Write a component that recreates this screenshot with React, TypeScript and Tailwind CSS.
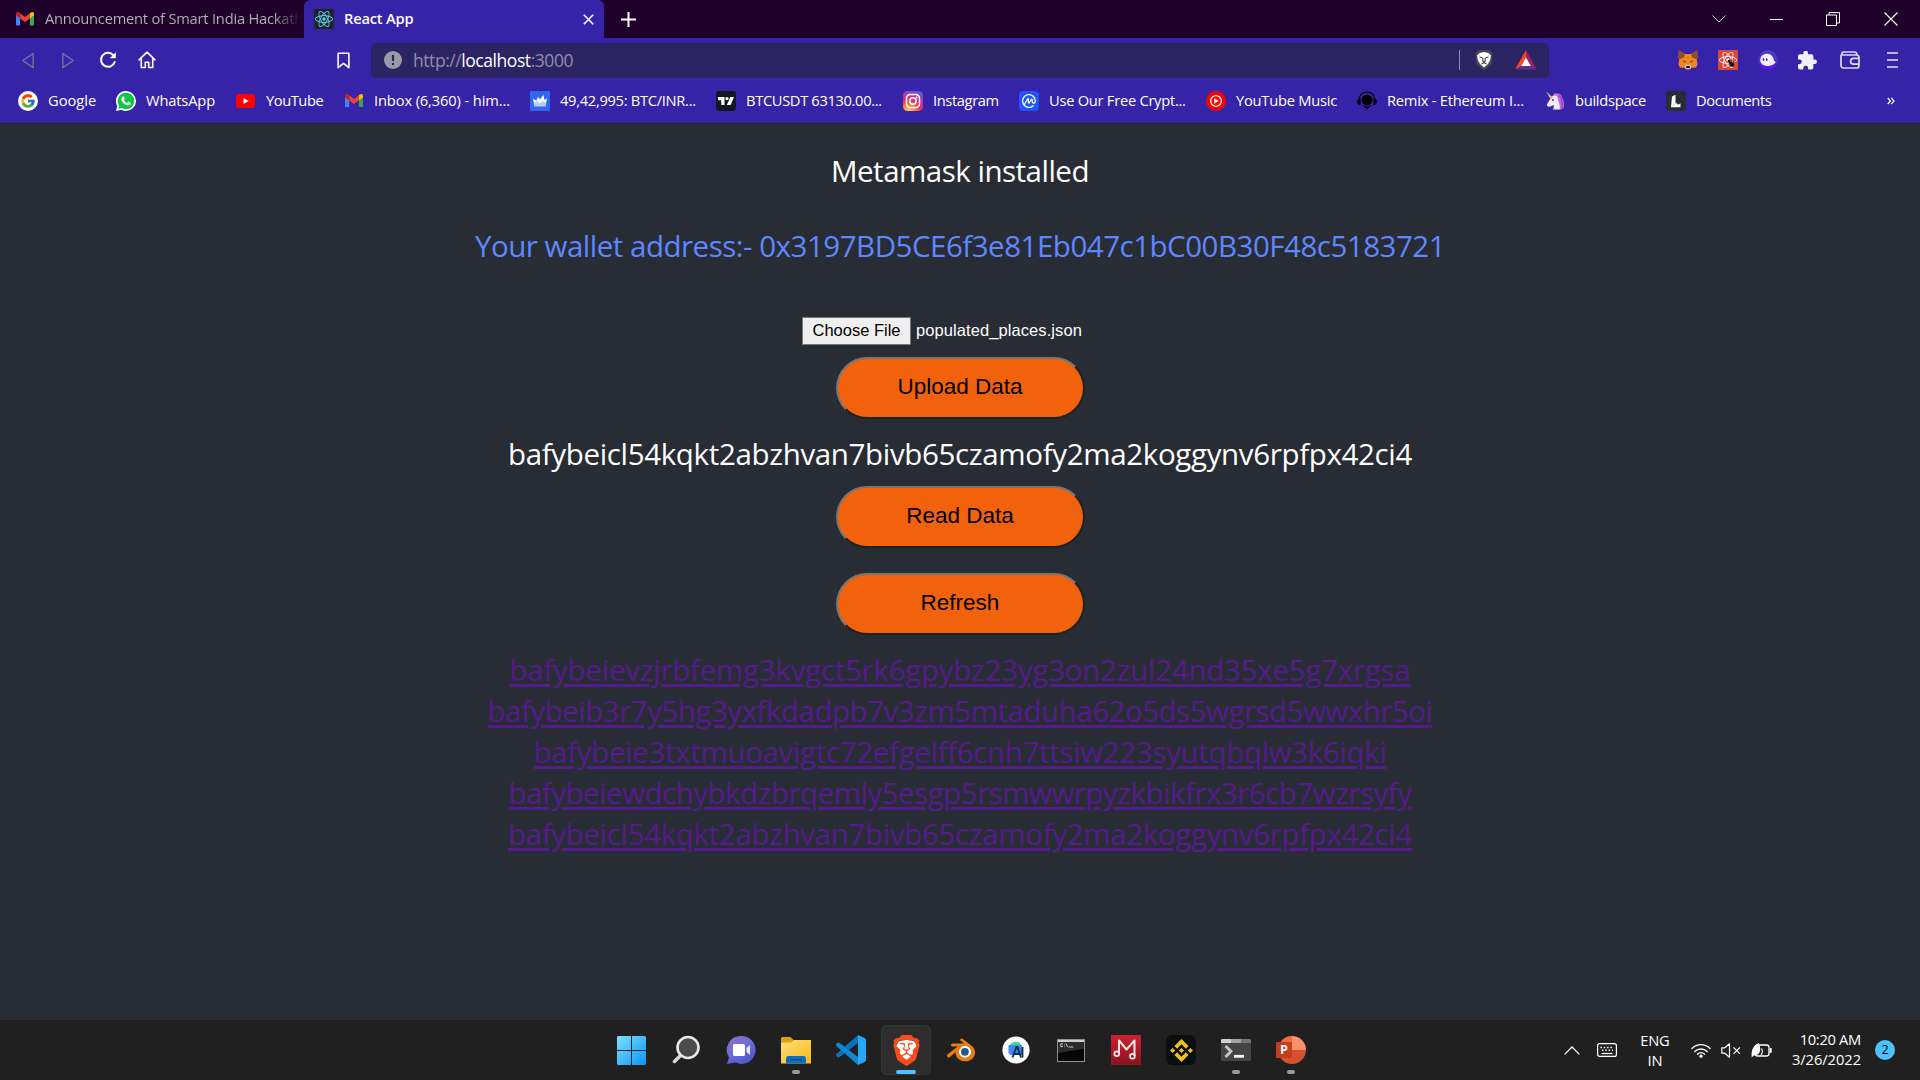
import React from "react";
import {
  SiBinance,
  SiBlender,
  SiBrave,
  SiCoinmarketcap,
  SiReact,
  SiTradingview,
} from "react-icons/si";
import { FcGoogle } from "react-icons/fc";

type IconProps = { className?: string };

/* ---------- favicons ---------- */

function Gmail({ className }: IconProps) {
  return (
    <svg viewBox="0 0 24 18" className={className}>
      <path d="M0 3v13.400a1.600 1.600 0 0 0 1.600 1.600h3.900V7L0 3z" fill="#4285f4" />
      <path d="M24 3v13.400a1.600 1.600 0 0 1-1.600 1.600h-3.900V7L24 3z" fill="#34a853" />
      <path d="M18.500 1.800V8.500L24 4.400V2.500C24 .2 21.400-.7 19.800.8z" fill="#fbbc04" />
      <path d="M5.500 8.500V1.800L12 6.700l6.500-4.900v6.700L12 13.400z" fill="#ea4335" />
      <path d="M0 2.500v1.900l5.500 4.100V1.800L4.200.8C2.600-.7 0 .2 0 2.500z" fill="#c5221f" />
    </svg>
  );
}

function ReactTile({ className }: IconProps) {
  return (
    <span className={`flex items-center justify-center rounded-[2px] bg-[#20232a] ${className}`}>
      <SiReact className="size-[18px] text-[#61dafb]" />
    </span>
  );
}

function GoogleFav() {
  return (
    <span className="flex size-5 items-center justify-center rounded-full bg-white">
      <FcGoogle className="size-4" />
    </span>
  );
}

function WhatsAppFav() {
  return (
    <svg viewBox="0 0 24 24" className="size-5">
      <path d="M12 0a12 12 0 0 1 0 24c-2.100 0-4.100-.5-5.800-1.500L0 24l1.600-6A12 12 0 0 1 12 0z" fill="#fff" />
      <path d="M12 2a10 10 0 0 1 0 20c-1.900 0-3.700-.5-5.300-1.500L2.800 21.500l1.100-3.700A10 10 0 0 1 12 2z" fill="#10c943" />
      <path d="M8.200 6.500c.5-.5 1.100-.3 1.400.3l.9 2c.2.500-.1 1-.9 1.900.9 1.800 2.100 2.900 3.900 3.600.8-1 1.200-1.500 1.700-1.300l2.200 1.100c.5.300.3 1.500-.3 2.200-1 1.100-2.700 1.200-4.600.5-3-1.200-5-3.500-6-5.800-.6-1.700.3-3.300 1.700-4.500z" fill="#fff" />
    </svg>
  );
}

function YouTubeFav() {
  return (
    <svg viewBox="0 0 20 20" className="size-5">
      <rect x="0" y="3" width="19" height="14" rx="3" fill="#f00" />
      <path d="M7.500 7l5.200 3-5.200 3z" fill="#fff" />
    </svg>
  );
}

function WazirFav() {
  return (
    <svg viewBox="0 0 20 20" className="size-5">
      <rect width="20" height="20" rx="1" fill="#3067f0" />
      <path d="M3 7.500l3.200 2.300L8 6l2 2.300L13.500 4l1 5L17 7.500l-1 5H4z" fill="#fff" />
      <path d="M3.700 12l3.800-2 2.500 2.500 2.500-2.500 3.800 2-.6 3.500H4.300z" fill="#b9cdfb" />
    </svg>
  );
}

function TradingFav() {
  return (
    <span className="flex size-5 items-center justify-center rounded-[3px] bg-[#131722]">
      <SiTradingview className="size-4 text-white" />
    </span>
  );
}

function InstagramFav() {
  return (
    <svg viewBox="0 0 20 20" className="size-5">
      <defs>
        <radialGradient id="ig" cx=".28" cy="1.05" r="1.100">
          <stop offset="0" stopColor="#ffdc74" />
          <stop offset=".3" stopColor="#fb8a3c" />
          <stop offset=".55" stopColor="#e4335f" />
          <stop offset=".8" stopColor="#b735a8" />
          <stop offset="1" stopColor="#5b58d8" />
        </radialGradient>
      </defs>
      <rect width="20" height="20" rx="4.500" fill="url(#ig)" />
      <rect x="3.500" y="3.500" width="13" height="13" rx="3.800" fill="none" stroke="#fff" strokeWidth="1.500" />
      <circle cx="10" cy="10" r="3.200" fill="none" stroke="#fff" strokeWidth="1.500" />
      <circle cx="13.700" cy="6.300" r=".9" fill="#fff" />
    </svg>
  );
}

function CoinFav() {
  return (
    <span className="flex size-5 items-center justify-center rounded-[4px] bg-[#1f56fb]">
      <SiCoinmarketcap className="size-[14px] text-white" />
    </span>
  );
}

function YtMusicFav() {
  return (
    <svg viewBox="0 0 20 20" className="size-5">
      <circle cx="10" cy="10" r="10" fill="#f00" />
      <circle cx="10" cy="10" r="5.300" fill="none" stroke="#fff" strokeWidth="1.200" />
      <path d="M8.200 7.200l4.600 2.800-4.600 2.800z" fill="#fff" />
    </svg>
  );
}

function RemixFav() {
  return (
    <svg viewBox="0 0 20 20" className="size-5">
      <path d="M2.300 8.500C2.600 3.500 6 1.200 10 1.200s7.400 2.300 7.700 7.300" fill="none" stroke="#0a0a14" strokeWidth="1.300" />
      <circle cx="10" cy="9" r="5.400" fill="#000" />
      <path d="M3.600 7v7C1.300 14 .2 12.500.2 10.500S1.300 7 3.600 7zM16.400 7v7c2.300 0 3.400-1.500 3.400-3.500S18.700 7 16.400 7z" fill="#000" />
      <path d="M5 13.800l5 2 5-2-5 4.700z" fill="#000" />
    </svg>
  );
}

function UnicornFav() {
  return (
    <svg viewBox="0 0 20 20" className="size-5">
      <path d="M9 3.800C12.500 1.200 17 3 17.300 7c2.200 2.500 1 5.500 2 8-.3 2.500-2.500 3.500-4.300 3.500l-4-8z" fill="#cf63dc" />
      <path d="M14 4.500c3 1.500 2.500 4 3 6.500s1 4 .3 6.500" fill="none" stroke="#7d48c9" strokeWidth="1.300" />
      <path d="M8 4.500l3.500 0c2 3 1.300 6 3 8.500l.5 5.500H8c.6-1.800 1-3.200.8-4.600l-4.100 1.900c-1.700.4-3.200-1-2.700-2.500L5.200 8z" fill="#f0eaf5" />
      <path d="M7.800 6.500L1 .5l2.600 3.400-.4.700 2.800 3.700z" fill="#f5c84c" />
      <path d="M1 .5l2.600 3.400 1.200-.3z" fill="#5fd0c5" />
      <path d="M8 4.500l2.500-2.700L11.200 5z" fill="#e387cf" />
      <circle cx="8" cy="9" r=".9" fill="#3a2b4d" />
    </svg>
  );
}

function DocsFav() {
  return (
    <svg viewBox="0 0 20 20" className="size-5">
      <rect width="20" height="20" rx="3" fill="#282c34" />
      <path d="M6 5.500L9.500 3.700v8.800l-3 3.800H5z" fill="#fff" />
      <path d="M6.500 16.300l3.600-4.600 2 2.100 2.400-1.500v4z" fill="#fff" />
    </svg>
  );
}

/* ---------- browser chrome ---------- */

const bookmarks = [
  { label: "Google", icon: <GoogleFav />, box: "w-[98px]", track: "tracking-[0px]" },
  { label: "WhatsApp", icon: <WhatsAppFav />, box: "w-[120px]", track: "tracking-[-0.15px]" },
  { label: "YouTube", icon: <YouTubeFav />, box: "w-[108px]", track: "tracking-[-0.45px]" },
  { label: "Inbox (6,360) - him...", icon: <span className="flex size-5 items-center justify-center"><Gmail className="w-[18px]" /></span>, box: "w-[186px]", track: "tracking-[-0.13px]" },
  { label: "49,42,995: BTC/INR...", icon: <WazirFav />, box: "w-[186px]", track: "tracking-[-0.3px]" },
  { label: "BTCUSDT 63130.00...", icon: <TradingFav />, box: "w-[187px]", track: "tracking-[-0.35px]" },
  { label: "Instagram", icon: <InstagramFav />, box: "w-[116px]", track: "tracking-[-0.38px]" },
  { label: "Use Our Free Crypt...", icon: <CoinFav />, box: "w-[187px]", track: "tracking-[-0.27px]" },
  { label: "YouTube Music", icon: <YtMusicFav />, box: "w-[151px]", track: "tracking-[-0.25px]" },
  { label: "Remix - Ethereum I...", icon: <RemixFav />, box: "w-[188px]", track: "tracking-[-0.23px]" },
  { label: "buildspace", icon: <UnicornFav />, box: "w-[121px]", track: "tracking-[-0.28px]" },
  { label: "Documents", icon: <DocsFav />, box: "w-[119px]", track: "tracking-[-0.35px]" },
];

function TabStrip() {
  return (
    <div className="flex h-[38px] items-center bg-[#1f002a]">
      <div className="flex h-full w-[304px] shrink-0 items-center pl-4">
        <Gmail className="w-[18px] shrink-0" />
        <span className="ml-[11px] w-[259px] shrink-0 bg-gradient-to-r from-[#b9b0bd] from-88% to-[#1f002a] to-99% bg-clip-text pb-[2px] text-[14.7px] leading-5 tracking-[-0.22px] whitespace-nowrap text-transparent">
          Announcement of Smart India Hackath
        </span>
      </div>
      <div className="flex h-full w-[300px] shrink-0 items-center rounded-t-[6px] bg-[#3623a7] pl-[10px]">
        <ReactTile className="size-5" />
        <span className="ml-[10px] flex-1 pb-[2px] text-[14.7px] leading-5 font-semibold tracking-[-0.22px] text-white">React App</span>
        <svg viewBox="0 0 11 11" className="mr-[10px] size-[11px]">
          <path d="M.8.8l9.400 9.400M10.200.8L.8 10.200" stroke="#fff" strokeWidth="1.600" />
        </svg>
      </div>
      <svg viewBox="0 0 15 15" className="ml-[17px] size-[15px]">
        <path d="M7.500 0v15M0 7.500h15" stroke="#fff" strokeWidth="2" />
      </svg>
      <div className="ml-auto flex items-center pr-[22px]">
        <svg viewBox="0 0 14 8" className="mr-[44px] w-[14px]">
          <path d="M.5.5L7 7 13.500.5" fill="none" stroke="#d5cdd8" strokeWidth="1" />
        </svg>
        <span className="mr-[43px] h-px w-[13px] bg-white" />
        <svg viewBox="0 0 14 14" className="mr-[44px] size-[14px]">
          <path d="M.5 3h10v10.500H.5zM3 3V.6h10.500v10.400h-3" fill="none" stroke="#fff" strokeWidth="1" />
        </svg>
        <svg viewBox="0 0 14 14" className="size-[14px]">
          <path d="M.5.5l13 13M13.500.5l-13 13" stroke="#fff" strokeWidth="1.100" />
        </svg>
      </div>
    </div>
  );
}

function Toolbar() {
  return (
    <div className="flex h-[44px] items-center">
      <svg viewBox="0 0 14 18" className="ml-[21px] h-[17px] w-[14px]">
        <path d="M12.500 1.500v15L1.500 9z" fill="none" stroke="#75709a" strokeWidth="1.500" strokeLinejoin="round" />
      </svg>
      <svg viewBox="0 0 14 18" className="ml-[26px] h-[17px] w-[14px]">
        <path d="M1.500 1.500v15L12.500 9z" fill="none" stroke="#75709a" strokeWidth="1.500" strokeLinejoin="round" />
      </svg>
      <svg viewBox="0 0 18 18" className="ml-[24px] size-[18px]">
        <path d="M14.300 4.200A7 7 0 1 0 15.700 11" fill="none" stroke="#fff" strokeWidth="2" strokeLinecap="round" />
        <path d="M16.800 1.200v6h-6z" fill="#fff" />
      </svg>
      <svg viewBox="0 0 18 18" className="ml-[21px] size-[18px]">
        <path d="M1 8.800L9 1.200l8 7.600M3.300 7.500v9h4v-5.300h3.400v5.300h4v-9" fill="none" stroke="#fff" strokeWidth="1.600" strokeLinejoin="round" strokeLinecap="round" />
      </svg>
      <svg viewBox="0 0 14 18" className="ml-[181px] h-[17px] w-[13px]">
        <path d="M1.200 1.200h11.600v15.500L7 12.200l-5.800 4.500z" fill="none" stroke="#fff" strokeWidth="1.700" strokeLinejoin="round" />
      </svg>
      <div className="ml-[21px] flex h-[35px] w-[1178px] items-center rounded-[5px] bg-[#2c2363] pl-[13px]">
        <svg viewBox="0 0 18 18" className="size-[18px]">
          <circle cx="9" cy="9" r="9" fill="#9b9ba8" />
          <path d="M9 3.800v6.200" stroke="#2c2363" strokeWidth="2.200" />
          <circle cx="9" cy="13" r="1.300" fill="#2c2363" />
        </svg>
        <span className="ml-[11px] text-[17.5px] leading-[24px] tracking-[-0.44px] text-[#908bb0]">
          http://<span className="text-white">localhost</span>:3000
        </span>
        <span className="ml-auto h-5 w-px bg-[#8e8aae]" />
        <span className="ml-[13px] flex h-[22px] w-[22px] items-center justify-center">
          <svg viewBox="0 0 20 22" className="h-[22px] w-5">
            <path d="M5 1h10l4 3.500-1.500 11L10 21.500 2.500 15.500 1 4.500z" fill="#45454f" />
            <path d="M5.500 4L10 3l4.500 1L17 6.500l-1 5-2 3.500-4 3.500L6 15l-2-3.500-1-5z" fill="#fff" />
            <path d="M5.500 8l3 .8M14.500 8l-3 .8M8.800 9v3L10 13.200 11.200 12V9M7.500 15l2.500-1.500 2.500 1.500" fill="none" stroke="#45454f" strokeWidth="1.100" />
          </svg>
        </span>
        <svg viewBox="0 0 22 20" className="mr-[12px] ml-[20px] h-5 w-[22px]">
          <path d="M11 0L0 19.500l6.200-3.500L11 7.500z" fill="#ff4724" />
          <path d="M11 0l11 19.500-6.200-3.500L11 7.500z" fill="#9e1f63" />
          <path d="M0 19.500h22L15.800 16H6.200z" fill="#662d91" />
          <path d="M11 7.500L6.200 16h9.600z" fill="#fff" />
        </svg>
      </div>
      <div className="ml-auto flex items-center pr-[22px]">
        <svg viewBox="0 0 20 20" className="mr-5 size-5">
          <path d="M.8.5L7 4h6L19.200.5l.3 7-.8 1.500.8 5.500-1.500 3.300-4-.3-1.500 1.500h-5L6 17.500l-4 .3L.5 14.500 1.300 9 .5 7.500z" fill="#ee8420" />
          <path d="M.8.5L7 4 5.800 7.500 1.300 9 .5 7.500zM19.200.5L13 4l1.200 3.500L18.700 9l.8-1.500z" fill="#8f5023" />
          <path d="M4.500 10.800l3.200.4-.5 1.400zM15.500 10.800l-3.200.4.5 1.400z" fill="#4a3420" />
          <path d="M6.500 17l1.200-2.200h4.600l1.200 2.200-1.700 2.200H8.200z" fill="#d5c6b8" />
          <path d="M8.300 16h3.400l.3 2H8z" fill="#161616" />
        </svg>
        <span className="relative mr-5 flex size-5 items-center justify-center rounded-[1px] bg-[#d9453a]">
          <SiReact className="size-[18px] text-white" />
          <svg viewBox="0 0 12 12" className="absolute right-[2px] bottom-[2px] size-[10px]">
            <ellipse cx="6.800" cy="7.200" rx="2.300" ry="3.600" transform="rotate(-40 6.800 7.200)" fill="#1c0d0b" />
            <circle cx="3.600" cy="3.600" r="1.600" fill="#1c0d0b" />
            <path d="M2 7.500l8.500-2M6.500 1.500l.8 9M4 10.500L10.500 3.500" stroke="#1c0d0b" strokeWidth=".7" />
          </svg>
        </span>
        <svg viewBox="0 0 20 20" className="mr-5 size-5">
          <defs>
            <linearGradient id="phantom" x1="0" y1="0" x2="0" y2="1">
              <stop offset="0" stopColor="#4a45b4" />
              <stop offset="1" stopColor="#5317f0" />
            </linearGradient>
          </defs>
          <circle cx="10" cy="10" r="10" fill="url(#phantom)" />
          <path d="M2.200 10C2.200 6.300 5.500 3.800 9 3.800c4.300 0 6.500 3 6.800 6.700.3 1 1.700.5 1.700 1.300 0 1.700-3.500 4.200-7.300 4.200-4.500 0-8-2.200-8-6z" fill="#f3f0ff" />
          <ellipse cx="5.500" cy="9.500" rx=".8" ry="1.500" fill="#3a2aa0" />
          <ellipse cx="8.700" cy="9.500" rx=".8" ry="1.500" fill="#3a2aa0" />
        </svg>
        <svg viewBox="2 1.500 21 21" className="mr-[23px] size-[19px]">
          <path d="M20.500 11H19V7a2 2 0 0 0-2-2h-4V3.500a2.500 2.500 0 0 0-5 0V5H4a2 2 0 0 0-2 2v3.800h1.500a2.700 2.700 0 0 1 0 5.400H2V20a2 2 0 0 0 2 2h3.800v-1.500a2.700 2.700 0 0 1 5.400 0V22H17a2 2 0 0 0 2-2v-4h1.500a2.500 2.500 0 0 0 0-5z" fill="#f1effa" />
        </svg>
        <svg viewBox="0 0 20 18" className="mr-[27px] h-[18px] w-5">
          <path d="M1 3.500v11A2.500 2.500 0 0 0 3.500 17h13a2.500 2.500 0 0 0 2.500-2.500v-8A2.500 2.500 0 0 0 16.500 4H3a1.600 1.600 0 0 1 0-3h11.500A2.200 2.200 0 0 1 16.700 3v1M19 7.300h-5.500a2.900 2.900 0 0 0 0 5.800H19" fill="none" stroke="#dcd8f0" strokeWidth="1.700" />
        </svg>
        <svg viewBox="0 0 11 16" className="h-4 w-[11px]">
          <path d="M0 1h11M0 8h11M0 15h11" stroke="#e6e3f5" strokeWidth="1.600" />
        </svg>
      </div>
    </div>
  );
}

function BookmarksBar() {
  return (
    <div className="flex h-[41px] items-center pb-[4px] pl-[18px]">
      {bookmarks.map((b) => (
        <div key={b.label} className={`flex shrink-0 items-center gap-[10px] ${b.box}`}>
          {b.icon}
          <span className={`pb-[2px] text-[14.7px] leading-5 whitespace-nowrap text-white ${b.track}`}>{b.label}</span>
        </div>
      ))}
      <svg viewBox="0 0 9 8" className="mr-[25px] ml-auto h-[8px] w-[8px]">
        <path d="M.8.5L3.800 4 .8 7.500M4.800.5L7.800 4 4.800 7.500" fill="none" stroke="#fff" strokeWidth="1.400" />
      </svg>
    </div>
  );
}

/* ---------- page ---------- */

const hashes = [
  { cid: "bafybeievzjrbfemg3kvgct5rk6gpybz23yg3on2zul24nd35xe5g7xrgsa", track: "tracking-[-0.26px]" },
  { cid: "bafybeib3r7y5hg3yxfkdadpb7v3zm5mtaduha62o5ds5wgrsd5wwxhr5oi", track: "tracking-[-0.49px]" },
  { cid: "bafybeie3txtmuoavigtc72efgelff6cnh7ttsiw223syutqbqlw3k6iqki", track: "tracking-[-0.34px]" },
  { cid: "bafybeiewdchybkdzbrqemly5esgp5rsmwwrpyzkbikfrx3r6cb7wzrsyfy", track: "tracking-[-0.5px]" },
  { cid: "bafybeicl54kqkt2abzhvan7bivb65czamofy2ma2koggynv6rpfpx42ci4", track: "tracking-[-0.346px]" },
];

function PillButton({ children, className }: { children: React.ReactNode; className: string }) {
  return (
    <button
      className={`h-[62px] w-[249px] rounded-[31px] border-2 border-t-[#767676] border-r-[#212121] border-b-[#212121] border-l-[#767676] bg-[#f2620d] pb-[4px] font-['Liberation_Sans',Arial,sans-serif] text-[22.5px] text-black ${className}`}
    >
      {children}
    </button>
  );
}

function Page() {
  return (
    <main className="flex flex-1 flex-col items-center border-t border-[#24262e] bg-[#282c34] pt-[26px] text-[29.5px] leading-[41px] text-white">
      <p className="tracking-[-0.5px]">Metamask installed</p>
      <p className="mt-[34px] tracking-[-0.49px] text-[#5f87ff]">
        Your wallet address:- 0x3197BD5CE6f3e81Eb047c1bC00B30F48c5183721
      </p>
      <div className="mt-[51px] flex w-[316px] items-center font-['Liberation_Sans',Arial,sans-serif] text-[16.5px] leading-5">
        <button className="h-[28px] w-[109px] border border-[#767676] bg-[#efefef] pb-[3px] text-black">
          Choose File
        </button>
        <span className="ml-[5px] pb-[2px] tracking-[0.08px]">populated_places.json</span>
      </div>
      <PillButton className="mt-[12px]">Upload Data</PillButton>
      <p className="mt-[14px] tracking-[-0.346px]">bafybeicl54kqkt2abzhvan7bivb65czamofy2ma2koggynv6rpfpx42ci4</p>
      <PillButton className="mt-[12px]">Read Data</PillButton>
      <PillButton className="mt-[25px]">Refresh</PillButton>
      <div className="mt-[14px] flex flex-col items-center text-[#551a8b]">
        {hashes.map((h) => (
          <a key={h.cid} className={`underline decoration-[3px] underline-offset-[3px] ${h.track}`}>
            {h.cid}
          </a>
        ))}
      </div>
    </main>
  );
}

/* ---------- taskbar ---------- */

function WindowsLogo() {
  return (
    <svg viewBox="0 0 29 29" className="size-[29px]">
      <defs>
        <linearGradient id="win" x1="0" y1="0" x2="29" y2="29" gradientUnits="userSpaceOnUse">
          <stop offset="0" stopColor="#7fe0fb" />
          <stop offset="1" stopColor="#0b93fb" />
        </linearGradient>
      </defs>
      <path d="M1 0h13v14H0V1zM15 0h13l1 1v13H15zM0 15h14v14H1l-1-1zM15 15h14v13l-1 1H15z" fill="url(#win)" />
    </svg>
  );
}

function SearchIcon() {
  return (
    <svg viewBox="0 0 28 30" className="h-[30px] w-7">
      <path d="M2.500 26.500L9 20" stroke="#d6d6d6" strokeWidth="3.600" strokeLinecap="round" />
      <circle cx="16" cy="12.500" r="10.500" fill="#4a4a4a" stroke="#e8e8e8" strokeWidth="2.600" />
    </svg>
  );
}

function ChatIcon() {
  return (
    <svg viewBox="0 0 30 30" className="size-[30px]">
      <defs>
        <linearGradient id="chat" x1="0" y1="0" x2=".6" y2="1">
          <stop offset="0" stopColor="#9a6cc0" />
          <stop offset=".5" stopColor="#6c6fd8" />
          <stop offset="1" stopColor="#5059c9" />
        </linearGradient>
      </defs>
      <path d="M15.500 1a14 14 0 1 1-6 26.600L1 29l2-6.500A14 14 0 0 1 15.500 1z" fill="url(#chat)" />
      <rect x="7" y="9" width="12" height="12" rx="1.500" fill="#fff" />
      <path d="M20.500 13l3.500-3v10l-3.500-3z" fill="#e8e6fb" />
    </svg>
  );
}

function FolderIcon() {
  return (
    <svg viewBox="0 0 30 27" className="h-[27px] w-[30px]">
      <defs>
        <linearGradient id="fold" x1="0" y1="0" x2="1" y2="1">
          <stop offset="0" stopColor="#ffe07a" />
          <stop offset="1" stopColor="#f9b81c" />
        </linearGradient>
      </defs>
      <path d="M0 1.500C0 .7.700 0 1.500 0h8l3 3H29v8H0z" fill="#dca10d" />
      <path d="M0 5.500h10l3-2.500h17v23.500H0z" fill="url(#fold)" />
      <path d="M5 26.500v-5a2.500 2.500 0 0 1 2.500-2.500h15a2.500 2.500 0 0 1 2.500 2.500v5z" fill="#0f6fbf" />
      <path d="M9 22.700h12" stroke="#0a4887" strokeWidth="1.200" />
    </svg>
  );
}

function VsCodeIcon() {
  return (
    <svg viewBox="0 0 30 30" className="size-[30px]">
      <path d="M22 0v8L3.300 22.300a1.300 1.300 0 0 1-1.700-.1L.4 21a1.300 1.300 0 0 1 0-1.900z" fill="#0a6fc0" />
      <path d="M22 30v-8L3.300 7.700a1.300 1.300 0 0 0-1.700.1L.4 9a1.300 1.300 0 0 0 0 1.900z" fill="#0f86d6" />
      <path d="M22 0l7 3.300c.6.300 1 .9 1 1.600v20.200c0 .7-.4 1.300-1 1.600L22 30z" fill="#28a5f3" />
    </svg>
  );
}

function BraveIcon() {
  return (
    <span className="relative flex size-[31px] items-center justify-center">
      <svg viewBox="0 0 31 31" className="absolute size-[31px]">
        <path d="M8 6l7.500-1.500L23 6l3 5-2.500 9.500-8 7-8-7L5 11z" fill="#fff" />
      </svg>
      <SiBrave className="relative size-[31px] text-[#fb4a1c]" />
    </span>
  );
}

function BlenderIcon() {
  return (
    <span className="relative flex size-[28px] items-center justify-center">
      <svg viewBox="0 0 28 28" className="absolute size-7">
        <circle cx="17.800" cy="15.800" r="6.500" fill="#fff" />
      </svg>
      <SiBlender className="relative size-[28px] text-[#ea7d12]" />
      <svg viewBox="0 0 28 28" className="absolute size-7">
        <circle cx="17.900" cy="15.800" r="5.800" fill="#fff" />
        <circle cx="17.900" cy="15.800" r="3.900" fill="#265787" />
      </svg>
    </span>
  );
}

function AndroidIcon() {
  return (
    <svg viewBox="0 0 28 28" className="size-7">
      <circle cx="14" cy="14" r="13.600" fill="#fff" />
      <path d="M8 9.500C8.500 7 11 5.800 14 5.800S18.500 7 19 9.500z" fill="#3ddc84" />
      <path d="M6.500 9H20v10H8.500l-2-2z" fill="#4285f4" />
      <path d="M10.500 21.500L14.500 11h1l3.500 10.500M12 18h6" fill="none" stroke="#073042" strokeWidth="1.800" />
      <path d="M20.500 11v10.500" stroke="#073042" strokeWidth="1.800" />
    </svg>
  );
}

function CmdIcon() {
  return (
    <svg viewBox="0 0 28 23" className="h-[23px] w-7">
      <rect x=".5" y=".5" width="27" height="22" fill="#060606" stroke="#8a9299" strokeWidth="1" />
      <rect x="1" y="1" width="26" height="2.200" fill="#c9ced3" />
      <path d="M1 3.200h26v6.500L1 14z" fill="#2b2b2b" />
      <path d="M6 4.800H3.800v2.800H6M7.500 5.300v.6M7.500 7v.6M9 4.500l1.500 3.300M11.500 8h5" fill="none" stroke="#dcdcdc" strokeWidth=".9" />
    </svg>
  );
}

function MusicIcon() {
  return (
    <svg viewBox="0 0 30 30" className="size-[30px]">
      <defs>
        <linearGradient id="mus" x1="0" y1="0" x2="0" y2="1">
          <stop offset="0" stopColor="#cb2230" />
          <stop offset="1" stopColor="#8c141f" />
        </linearGradient>
      </defs>
      <rect width="30" height="30" fill="url(#mus)" />
      <path d="M8 18.500V5.500l7.500 9 8-9v15.500" fill="none" stroke="#f5e9ea" strokeWidth="2" strokeLinejoin="round" />
      <circle cx="5.800" cy="18.800" r="2.400" fill="none" stroke="#f5e9ea" strokeWidth="1.700" />
      <circle cx="21.400" cy="21.200" r="2.400" fill="none" stroke="#f5e9ea" strokeWidth="1.700" />
    </svg>
  );
}

function BinanceIcon() {
  return (
    <span className="flex size-[30px] items-center justify-center rounded-[6px] bg-[#0b0e11]">
      <SiBinance className="size-[23px] text-[#f0c31a]" />
    </span>
  );
}

function TerminalIcon() {
  return (
    <svg viewBox="0 0 30 22" className="h-[22px] w-[30px]">
      <rect width="30" height="22" rx="1.500" fill="#454545" />
      <path d="M1 0h9v4H0V1z" fill="#d0d0d0" />
      <path d="M10 0h10v4H10z" fill="#a3a3a3" />
      <path d="M20 0h9l1 1v3H20z" fill="#757575" />
      <path d="M4.500 7l5.500 5.300L4.500 18" fill="none" stroke="#c8c8c8" strokeWidth="2.800" />
      <path d="M13 17.300h10" stroke="#f5f5f5" strokeWidth="2.800" />
    </svg>
  );
}

function PowerPointIcon() {
  return (
    <svg viewBox="0 0 30 28" className="h-7 w-[30px]">
      <path d="M16 0a14 14 0 1 0 14 14H16z" fill="#d35230" />
      <path d="M2.300 14A14 14 0 0 1 16 0v14z" fill="#ed6c47" />
      <path d="M16 0a14 14 0 0 1 14 14H16z" fill="#ff8f6b" />
      <rect x="0" y="6" width="16" height="16" rx="1.200" fill="#c43e1c" />
      <text x="4" y="18.300" fill="#fff" fontSize="12.500" fontWeight="700" fontFamily="Open Sans, sans-serif">P</text>
    </svg>
  );
}

const apps: { id: string; icon: React.ReactNode; state?: "open" | "active" }[] = [
  { id: "start", icon: <WindowsLogo /> },
  { id: "search", icon: <SearchIcon /> },
  { id: "chat", icon: <ChatIcon /> },
  { id: "explorer", icon: <FolderIcon />, state: "open" },
  { id: "code", icon: <VsCodeIcon /> },
  { id: "brave", icon: <BraveIcon />, state: "active" },
  { id: "blender", icon: <BlenderIcon /> },
  { id: "android", icon: <AndroidIcon /> },
  { id: "cmd", icon: <CmdIcon /> },
  { id: "music", icon: <MusicIcon /> },
  { id: "binance", icon: <BinanceIcon /> },
  { id: "terminal", icon: <TerminalIcon />, state: "open" },
  { id: "powerpoint", icon: <PowerPointIcon />, state: "open" },
];

function Taskbar() {
  return (
    <footer className="grid h-[60px] grid-cols-[1fr_auto_1fr] items-center bg-[#202020] text-white">
      <div />
      <div className="flex pl-[2px]">
        {apps.map((a) => (
          <div key={a.id} className="flex w-[55px] justify-center">
            <div
              className={
                a.state === "active"
                  ? "relative flex size-[50px] items-center justify-center rounded-[5px] border border-[#353535] bg-[#2d2d2d]"
                  : "relative flex size-[50px] items-center justify-center"
              }
            >
              {a.icon}
              {a.state === "active" && <span className="absolute bottom-0 h-1 w-5 rounded-full bg-[#4cc2ff]" />}
              {a.state === "open" && <span className="absolute bottom-px h-1 w-2 rounded-full bg-[#9a9a9a]" />}
            </div>
          </div>
        ))}
      </div>
      <div className="flex items-center justify-end pr-[25px] text-[14.7px] leading-5">
        <svg viewBox="0 0 16 9" className="mr-[17px] h-[9px] w-4">
          <path d="M.6 8.400L8 1l7.400 7.400" fill="none" stroke="#fff" strokeWidth="1.300" />
        </svg>
        <svg viewBox="0 0 20 14" className="mr-[23px] h-[14px] w-5">
          <rect x=".6" y=".6" width="18.800" height="12.800" rx="2" fill="none" stroke="#fff" strokeWidth="1.200" />
          <path d="M3.500 4.500h13M5 7.300h11" stroke="#fff" strokeWidth="1.400" strokeDasharray="1.500 1.800" />
          <path d="M4.500 10.500h11" stroke="#fff" strokeWidth="1.300" />
        </svg>
        <div className="mr-[21px] w-[30px] text-center tracking-[-0.2px]">
          <p>ENG</p>
          <p>IN</p>
        </div>
        <svg viewBox="0 0 20 15" className="mr-[10px] h-[15px] w-5">
          <path d="M1 5.500a12.500 12.500 0 0 1 18 0M3.800 8.500a8.800 8.800 0 0 1 12.400 0M6.500 11.200a5 5 0 0 1 7 0" fill="none" stroke="#fff" strokeWidth="1.400" strokeLinecap="round" />
          <circle cx="10" cy="13.200" r="1.600" fill="#fff" />
        </svg>
        <svg viewBox="0 0 20 15" className="mr-[10px] h-[15px] w-5">
          <path d="M.8 4.800h3L8.500.8v13.400l-4.700-4h-3z" fill="none" stroke="#fff" strokeWidth="1.200" strokeLinejoin="round" />
          <path d="M12.500 4.300l6.500 6.500M19 4.300l-6.500 6.500" stroke="#fff" strokeWidth="1.200" />
        </svg>
        <svg viewBox="0 0 21 15" className="mr-[20px] h-[15px] w-[21px]">
          <rect x="4" y="2" width="14" height="11" rx="2.500" fill="none" stroke="#fff" strokeWidth="1.300" />
          <path d="M19 5.500h1.300v4H19z" fill="#fff" stroke="#fff" strokeWidth=".8" />
          <path d="M7.500 0C9.500 3.500 10 8 7.800 10.500 6.500 12 4 12 2.800 12.500L.8 14.500C0 9 1 3.500 7.500 0z" fill="#fff" />
          <path d="M10.500 5.500c1.300 2.500 1 5-.8 7" fill="none" stroke="#fff" strokeWidth="1.100" />
        </svg>
        <div className="mr-[14px] pb-[2px] text-right">
          <p className="tracking-[-0.3px]">10:20 AM</p>
          <p className="tracking-[-0.05px]">3/26/2022</p>
        </div>
        <span className="flex size-5 items-center justify-center rounded-full bg-[#4cc2ff] text-[12.500px] text-black">2</span>
      </div>
    </footer>
  );
}

export default function App() {
  return (
    <div className="flex h-[1080px] w-[1920px] flex-col overflow-hidden bg-[#282c34] font-['Open_Sans','Noto_Sans',sans-serif]">
      <header>
        <TabStrip />
        <div className="bg-[#3623a7]">
          <Toolbar />
          <BookmarksBar />
        </div>
      </header>
      <Page />
      <Taskbar />
    </div>
  );
}
